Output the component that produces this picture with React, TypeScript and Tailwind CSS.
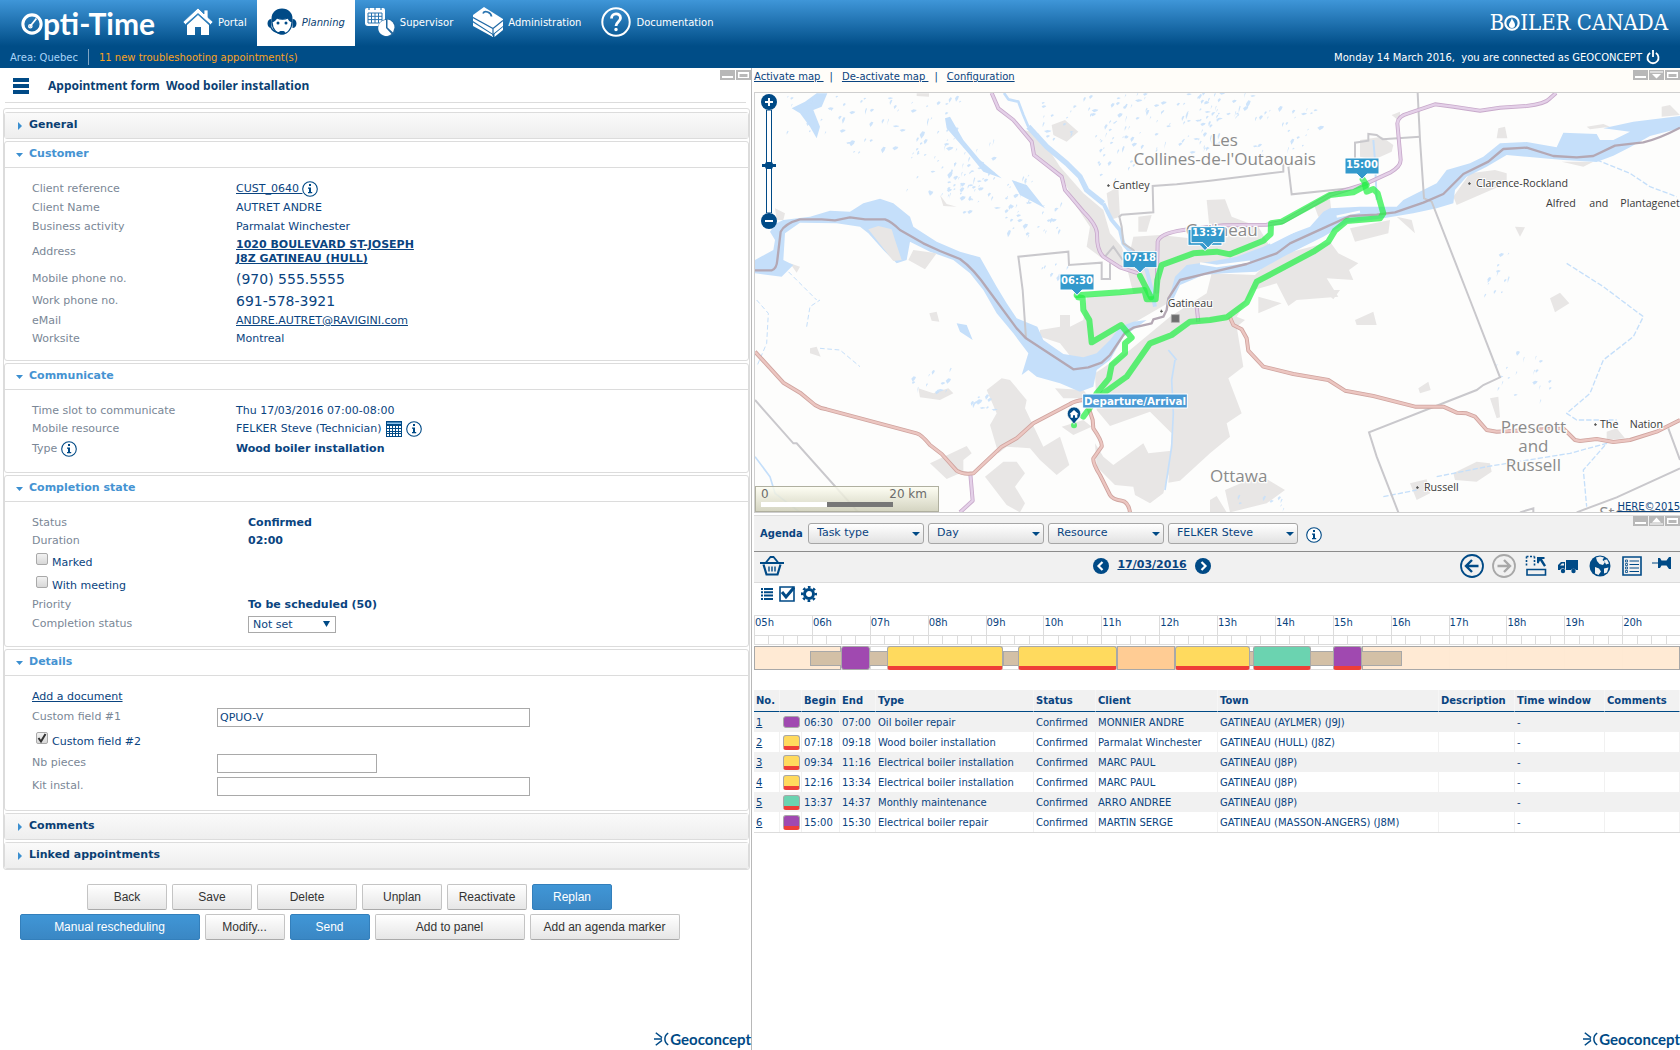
import React, { useState } from 'react';

type Appointment = {
  no: number;
  begin: string;
  end: string;
  type: string;
  client: string;
  town: string;
  color: 'purple' | 'yellow' | 'green';
  late: boolean;
};

const APPOINTMENTS: Appointment[] = [
  { no: 1, begin: '06:30', end: '07:00', type: 'Oil boiler repair', client: 'MONNIER ANDRE', town: 'GATINEAU (AYLMER) (J9J)', color: 'purple', late: false },
  { no: 2, begin: '07:18', end: '09:18', type: 'Wood boiler installation', client: 'Parmalat Winchester', town: 'GATINEAU (HULL) (J8Z)', color: 'yellow', late: true },
  { no: 3, begin: '09:34', end: '11:16', type: 'Electrical boiler installation', client: 'MARC PAUL', town: 'GATINEAU (J8P)', color: 'yellow', late: true },
  { no: 4, begin: '12:16', end: '13:34', type: 'Electrical boiler installation', client: 'MARC PAUL', town: 'GATINEAU (J8P)', color: 'yellow', late: true },
  { no: 5, begin: '13:37', end: '14:37', type: 'Monthly maintenance', client: 'ARRO ANDREE', town: 'GATINEAU (J8P)', color: 'green', late: true },
  { no: 6, begin: '15:00', end: '15:30', type: 'Electrical boiler repair', client: 'MARTIN SERGE', town: 'GATINEAU (MASSON-ANGERS) (J8M)', color: 'purple', late: true },
];

const TASK_COLORS = {
  purple: 'bg-[#a049b0]',
  yellow: 'bg-[#ffda5e]',
  green: 'bg-[#6bd3b0]',
};

const HOURS = ['05h', '06h', '07h', '08h', '09h', '10h', '11h', '12h', '13h', '14h', '15h', '16h', '17h', '18h', '19h', '20h'];

const toHours = (time: string) => {
  const [h, m] = time.split(':').map(Number);
  return h + m / 60;
};

// The timeline covers 05h to 21h
const span = (from: number, to: number) => ({
  left: `${((from - 5) / 16) * 100}%`,
  width: `${((to - from) / 16) * 100}%`,
});

/* ---------- Icons ---------- */

const InfoIcon = () => (
  <svg viewBox="0 0 16 16" className="w-4 h-4 shrink-0">
    <circle cx="8" cy="8" r="7.3" fill="#fff" stroke="#004a86" strokeWidth="1.1" />
    <path d="M7 3h2v2H7zM6 6.5h3V11h1.2v1.2H6V11h1V7.7H6z" fill="#004a86" />
  </svg>
);

const HomeIcon = () => (
  <svg viewBox="0 0 30 30" className="w-[30px] h-[30px]">
    <path d="M15 8 4 18v10h8v-8h6v8h8V18z" fill="#fff" />
    <path d="M15 1 0 15l2.5 2.5L15 6.5l12.500 11L30 15l-5-4.500V3h-4v4z" fill="#fff" stroke="#2f82c2" strokeWidth=".8" />
  </svg>
);

const AgentIcon = () => (
  <svg viewBox="0 0 30 30" className="w-[30px] h-[30px]">
    <path d="M15 1.500C8.500 1.500 4.500 6 4.500 11.500v4h21v-4C25.500 6 21.500 1.500 15 1.500z" fill="#004a86" />
    <path d="M4.500 12C2 12 .5 14 .5 16.500S2 21 4.500 21zM25.500 12c2.500 0 4 2 4 4.500s-1.500 4.500-4 4.500z" fill="#004a86" />
    <path d="M5 15c2.500-1 4-2.500 5-4 3 1.500 8 1.500 11 0 .5 1.500 2 3 4 4-.2 7-4.500 12-10 12S5.200 22 5 15z" fill="#fff" stroke="#004a86" strokeWidth="1.200" />
    <circle cx="11" cy="16" r="1.500" fill="#004a86" />
    <circle cx="19" cy="16" r="1.500" fill="#004a86" />
    <path d="M4 20.500c1.500 3.500 5 5 9 5.500" fill="none" stroke="#004a86" strokeWidth="1.600" />
    <rect x="12" y="24" width="6" height="3.500" rx="1.500" fill="#004a86" />
  </svg>
);

const SupervisorIcon = () => (
  <svg viewBox="0 0 30 30" className="w-[30px] h-[30px]">
    <path d="M2 1h16a2 2 0 0 1 2 2v16H3a3 3 0 0 1-3-3V3a2 2 0 0 1 2-2z" fill="#fff" />
    <path d="M4 0v3M10 0v3M16 0v3" stroke="#2e7dbb" strokeWidth="1.200" />
    <path d="M3 6h14v10H3zM3 9.300h14M3 12.600h14M6.500 6v10M10 6v10M13.500 6v10" fill="none" stroke="#2a74b0" strokeWidth="1" />
    <circle cx="22" cy="21" r="9" fill="#20679f" />
    <path d="M21 13a8 8 0 1 0 5.500 14L21 21z" fill="#fff" />
    <path d="M22.500 12.500a8 8 0 0 1 7 8l-1.500 5-5.500-5z" fill="#fff" />
  </svg>
);

const ToolboxIcon = () => (
  <svg viewBox="0 0 30 30" className="w-[30px] h-[30px]">
    <path d="M0 8 11 0l19 12v7l-10 8L0 14z" fill="#fff" />
    <path d="M0 15.500 20 28v2L0 19zM21.500 27l8.500-7v3l-8.500 7z" fill="#fff" />
    <path d="m0 10.500 20 11 10-8M20 21.500V29" fill="none" stroke="#2069a5" strokeWidth="1.200" />
    <path d="M10 6.500c1.500-3.500 8-1.500 8.500 3" fill="none" stroke="#2a74b0" strokeWidth="1.800" />
  </svg>
);

const HelpIcon = () => (
  <svg viewBox="0 0 30 30" className="w-[30px] h-[30px]" fill="none" stroke="#fff">
    <circle cx="15" cy="15" r="13.700" strokeWidth="2" />
    <path d="M10.500 11.500c0-6 9-6 9-.5 0 3.500-4.500 4-4.500 8" strokeWidth="2.800" />
    <circle cx="15" cy="22.500" r="1" strokeWidth="1.500" fill="#fff" />
  </svg>
);

const PowerIcon = () => (
  <svg viewBox="0 0 14 16" className="w-3.5 h-4" fill="none" stroke="#fff" strokeWidth="1.800">
    <path d="M4.200 4a5.500 5.500 0 1 0 5.600 0M7 1v7" />
  </svg>
);

const GridIcon = () => (
  <svg viewBox="0 0 16 16" className="w-4 h-4">
    <path d="M0 0h16v16H0z" fill="#004a86" />
    <path d="M1 1.500h14v1.500H1z" fill="#8cc4ee" />
    <path d="M1 5h2v2H1zM4 5h2v2H4zM7 5h2v2H7zM10 5h2v2h-2zM13 5h2v2h-2zM1 8h2v2H1zM4 8h2v2H4zM7 8h2v2H7zM10 8h2v2h-2zM13 8h2v2h-2zM1 11h2v1H1zM4 11h2v1H4zM7 11h2v1H7zM10 11h2v1h-2zM13 11h2v1h-2zM1 13h2v2H1zM4 13h2v2H4zM7 13h2v2H7zM10 13h2v2h-2zM13 13h2v2h-2z" fill="#fff" />
  </svg>
);

const BasketIcon = () => (
  <svg viewBox="0 0 24 20" className="w-6 h-5" fill="none" stroke="#004a86">
    <path d="m5.500 7 5-6h3l5 6M0 7h24" strokeWidth="1.800" />
    <path d="m3.500 8.500 3 10h11l3-10" strokeWidth="2.200" />
    <path d="M9 10.500v5M12 10.500v5M15 10.500v5" strokeWidth="1.400" />
  </svg>
);

const ChevronCircle = ({ d }: { d: string }) => (
  <svg viewBox="0 0 16 16" className="w-4 h-4">
    <circle cx="8" cy="8" r="8" fill="#004a86" />
    <path d={d} fill="none" stroke="#fff" strokeWidth="2.200" />
  </svg>
);

const ArrowCircle = ({ d, color }: { d: string; color: string }) => (
  <svg viewBox="0 0 24 24" className="w-6 h-6" fill="none" stroke={color}>
    <circle cx="12" cy="12" r="11" strokeWidth="1.800" />
    <path d={d} strokeWidth="2.400" />
  </svg>
);

const UnplaceIcon = () => (
  <svg viewBox="0 0 22 22" className="w-[22px] h-[22px]" fill="none" stroke="#004a86">
    <path d="M1.500 1.500h8M1.500 1.500V12M9.500 1.500V12" strokeWidth="1.600" strokeDasharray="2 1.500" />
    <path d="M12 2h7.500v2H17l4 6.500-2 1.300-4-6.300-1.500 3L12 8z" fill="#004a86" stroke="none" />
    <path d="M2 14.500h18.500V20H2z" strokeWidth="1.600" />
  </svg>
);

const TruckIcon = () => (
  <svg viewBox="0 0 22 22" className="w-[22px] h-[22px]" fill="#004a86">
    <path d="M9 5h12v10h-2a3 3 0 0 0-5 0H8.500a3 3 0 0 0-5.500 0H1v-5l3-3h4v8h1z" />
    <path d="M3 10.500 5 8.500h2v2z" fill="#f1f1f1" />
    <circle cx="6" cy="16" r="2.200" />
    <circle cx="16.500" cy="16" r="2.200" />
  </svg>
);

const GlobeIcon = () => (
  <svg viewBox="0 0 22 22" className="w-[22px] h-[22px]">
    <circle cx="11" cy="11" r="10.500" fill="#004a86" />
    <path d="M7 2.500 11 1.500l4 1-1.500 2.500L16 7l-2 3-3.500-1-2.500-3zM15 5l3-.5 2 4-3 1zM6 12l4 1.500 2 3L9.500 20 6 18.500zM15 13.500l4.500-1L18 17.500l-3 1z" fill="#f1f1f1" />
  </svg>
);

const SheetIcon = () => (
  <svg viewBox="0 0 20 20" className="w-5 h-5" fill="none" stroke="#004a86">
    <path d="M1 1h18v18H1z" strokeWidth="1.600" />
    <path d="M7.500 5H17M7.500 8.500H17M7.500 12H17M7.500 15.500H17" strokeWidth="1.200" />
    <path d="M3.500 4h2v2h-2zM3.500 7.500h2v2h-2zM3.500 11h2v2h-2zM3.500 14.500h2v2h-2z" strokeWidth=".8" />
  </svg>
);

const PinIcon = () => (
  <svg viewBox="0 0 20 14" className="w-5 h-3.5" fill="#004a86">
    <path d="M0 6.500h6V2h2l1.500 2.500h5L17 1h2v12h-2l-2.500-3.500h-5L8 12H6V7.500H0z" />
  </svg>
);

const WindowButton = ({ kind, label }: { kind: 'min' | 'down' | 'up' | 'max'; label: string }) => (
  <button type="button" aria-label={label} className="block bg-[#b8b8b8] hover:bg-gray-500">
    <svg viewBox="0 0 15 10" className="w-[15px] h-2.5" fill="#fff">
      {kind === 'min' && <path d="M2 6h11v2H2z" />}
      {kind === 'down' && <path d="M1 1.500h13v1H1zM3 4h9L7.500 8.500z" />}
      {kind === 'up' && <path d="M1 7.500h13v1H1zM3 6.500h9L7.500 1.500z" />}
      {kind === 'max' && <path d="M2 2h11v6H2zM3.500 4h8v3h-8z" fillRule="evenodd" />}
    </svg>
  </button>
);

const GeoconceptLogo = () => (
  <div className="flex items-center justify-end text-[#004a86]">
    <svg viewBox="0 0 18 16" className="w-4 h-4" fill="none" stroke="#004a86" strokeWidth="1.700">
      <path d="M0 8h9M2 1l7 5.500M2 15l7-5.500M16 1.500c-5 3-5 10 0 13" />
    </svg>
    <span className="font-['Lato',sans-serif] font-bold text-[15px] leading-4">Geoconcept</span>
  </div>
);

/* ---------- Header ---------- */

const NAV = [
  { label: 'Portal', icon: <HomeIcon /> },
  { label: 'Planning', icon: <AgentIcon /> },
  { label: 'Supervisor', icon: <SupervisorIcon /> },
  { label: 'Administration', icon: <ToolboxIcon /> },
  { label: 'Documentation', icon: <HelpIcon /> },
];

const Header = () => (
  <header className="h-[68px] bg-[linear-gradient(#3f96d8,#004d87_46px)] text-white text-[10px]">
    <div className="h-[46px] flex items-center">
      <div className="w-[173px] pl-[21px] flex items-center font-['Lato',sans-serif] font-bold text-[30px] leading-none">
        <svg viewBox="0 0 20 20" className="w-[22px] h-[22px] mt-0.5" fill="none" stroke="#fff">
          <circle cx="10" cy="10" r="8.300" strokeWidth="2.800" />
          <path d="M8 12.500 14 5" strokeWidth="1.600" />
          <circle cx="8.500" cy="12" r="1.500" strokeWidth="1.200" />
        </svg>
        <span>pti-Time</span>
      </div>
      <nav className="flex">
        {NAV.map(item => {
          const active = item.label === 'Planning';
          return (
            <a
              key={item.label}
              href="#"
              className={`h-[46px] px-2.5 flex items-center gap-[5px] pb-0.5 ${active ? 'bg-white text-[#0b3f73] italic' : 'text-white'}`}
            >
              {item.icon}
              {item.label}
            </a>
          );
        })}
      </nav>
      <div className="ml-auto pr-3 flex items-center font-['DejaVu_Serif_Condensed','DejaVu_Serif',serif] text-[22px] leading-none">
        B
        <svg viewBox="0 0 16 16" className="w-4 h-4">
          <circle cx="8" cy="8" r="6.700" fill="none" stroke="#fff" strokeWidth="2.200" />
          <path d="M8 2.500c0 3 3 4 3 7.500a3 3 0 0 1-6 0c0-2 2-3 3-7.500z" fill="#fff" />
        </svg>
        ILER CANADA
      </div>
    </div>
    <div className="h-[22px] pl-2.5 pr-5 flex items-center">
      <span className="text-[#a8d4f8]">Area: Quebec</span>
      <span className="w-px h-4 mx-2.5 bg-[#7fa5c4]" />
      <a href="#" className="text-[#f9a11f]">11 new troubleshooting appointment(s)</a>
      <span className="ml-auto mr-1">Monday 14 March 2016,&nbsp; you are connected as GEOCONCEPT</span>
      <button type="button" aria-label="Log out"><PowerIcon /></button>
    </div>
  </header>
);

/* ---------- Appointment form ---------- */

const Section = ({ title, children }: { title: string; children?: React.ReactNode }) => {
  const open = Boolean(children);
  return (
    <section className="border border-[#dcdcdc] rounded-[3px] bg-white">
      <h2 className={open ? 'border-b border-[#dcdcdc]' : 'bg-linear-to-b from-[#fafafa] to-[#eeeeee]'}>
        <button
          type="button"
          aria-expanded={open}
          className={`w-full h-[25px] pl-[11px] flex items-center gap-1.5 text-[11px] font-bold ${open ? 'text-[#4593d2]' : 'text-[#0b3f73]'}`}
        >
          <svg viewBox="0 0 7 8" className="w-[7px] h-2" fill="#3b8fd0">
            {open ? <path d="M0 2h7L3.500 6z" /> : <path d="M2 0v8l4-4z" />}
          </svg>
          {title}
        </button>
      </h2>
      {open && <div className="py-3 pl-[27px]">{children}</div>}
    </section>
  );
};

type RowProps = { label: React.ReactNode; height?: string; labelWidth?: string; htmlFor?: string; children: React.ReactNode };

const Row = ({ label, height = 'h-[18px]', labelWidth = 'w-[204px]', htmlFor, children }: RowProps) => (
  <div className={`flex items-center ${height}`}>
    {htmlFor ? (
      <label htmlFor={htmlFor} className={`${labelWidth} shrink-0 text-[#7a8796]`}>{label}</label>
    ) : (
      <span className={`${labelWidth} shrink-0 flex items-center gap-1 text-[#7a8796]`}>{label}</span>
    )}
    {children}
  </div>
);

const Check = ({ label, checked }: { label: string; checked?: boolean }) => (
  <label className="flex items-start gap-1 pl-1 w-fit">
    <span className="relative block w-3 h-3">
      <input
        type="checkbox"
        defaultChecked={checked}
        className="peer block appearance-none w-3 h-3 border border-[#a9a9a9] rounded-[2px] bg-linear-to-b from-[#f2f2f2] to-[#d8d8d8]"
      />
      <svg viewBox="0 0 12 12" className="absolute inset-0 w-3 h-3 hidden peer-checked:block pointer-events-none">
        <path d="m2.500 6 2.500 3.500L9.500 2" fill="none" stroke="#333" strokeWidth="2" />
      </svg>
    </span>
    <span className="pt-[3px] leading-[14px]">{label}</span>
  </label>
);

const FormButton = ({ children, primary, width = 'w-20' }: { children: React.ReactNode; primary?: boolean; width?: string }) => (
  <button
    type="button"
    className={`${width} h-[26px] rounded-[2px] border text-[12px] font-['Liberation_Sans',Arial,sans-serif] ${
      primary
        ? 'border-[#337fbb] bg-linear-to-b from-[#4096d6] to-[#3a87c4] text-white'
        : 'border-[#c4c4c4] border-b-[#aaaaaa] bg-linear-to-b from-white to-[#e6e6e6] text-[#333333]'
    }`}
  >
    {children}
  </button>
);

const AppointmentForm = () => (
  <div className="min-w-0 flex flex-col border-r border-[#b8b8b8]">
    <div className="h-[34px] flex items-center pl-[13px]">
      <button type="button" aria-label="Menu" className="flex flex-col gap-0.5 mt-0.5">
        <span className="block w-4 h-1 bg-[#004a86]" />
        <span className="block w-4 h-1 bg-[#004a86]" />
        <span className="block w-4 h-1 bg-[#004a86]" />
      </button>
      <h1 className="ml-[19px] mt-0.5 text-[12px] font-bold text-[#0b3f73] font-['Noto_Sans','DejaVu_Sans',sans-serif]">
        Appointment form&nbsp; Wood boiler installation
      </h1>
      <div className="ml-auto self-start mt-0.5 flex gap-px">
        <WindowButton kind="min" label="Minimise" />
        <WindowButton kind="max" label="Maximise" />
      </div>
    </div>
    <div className="mx-[5px] border-t border-[#dcdcdc]" />

    <div className="mt-[5px] ml-[3px] mr-px pt-[3px] border border-[#dcdcdc] rounded-[3px] flex flex-col gap-0.5">
      <Section title="General" />
      <Section title="Customer">
        <Row label="Client reference">
          <a href="#" className="underline">CUST_0640&nbsp;</a>
          <InfoIcon />
        </Row>
        <Row label="Client Name" height="h-5">AUTRET ANDRE</Row>
        <Row label="Business activity">Parmalat Winchester</Row>
        <Row label="Address" height="h-8">
          <a href="#" className="font-bold underline leading-[14px]">
            1020 BOULEVARD ST-JOSEPH
            <br />
            J8Z GATINEAU (HULL)
          </a>
        </Row>
        <Row label="Mobile phone no." height="h-[22px]"><span className="text-[14px]">(970) 555.5555</span></Row>
        <Row label="Work phone no." height="h-[22px]"><span className="text-[14px]">691-578-3921</span></Row>
        <Row label="eMail"><a href="#" className="underline">ANDRE.AUTRET@RAVIGINI.com</a></Row>
        <Row label="Worksite">Montreal</Row>
      </Section>
      <Section title="Communicate">
        <Row label="Time slot to communicate">Thu 17/03/2016 07:00-08:00</Row>
        <Row label="Mobile resource">
          <span className="flex items-center gap-1">FELKER Steve (Technician) <GridIcon /> <InfoIcon /></span>
        </Row>
        <Row label={<>Type <InfoIcon /></>} height="h-[22px]"><b>Wood boiler installation</b></Row>
      </Section>
      <Section title="Completion state">
        <Row label="Status" labelWidth="w-[216px]"><b>Confirmed</b></Row>
        <Row label="Duration" labelWidth="w-[216px]"><b>02:00</b></Row>
        <div className="h-[23px] flex items-center"><Check label="Marked" /></div>
        <div className="h-[23px] flex items-center"><Check label="With meeting" /></div>
        <Row label="Priority" labelWidth="w-[216px]"><b>To be scheduled (50)</b></Row>
        <Row label="Completion status" labelWidth="w-[216px]" height="h-5" htmlFor="completion">
          <span className="relative">
            <select id="completion" className="block appearance-none w-[88px] h-[17px] pl-1 border border-[#a9a9a9] bg-white">
              <option>Not set</option>
            </select>
            <svg viewBox="0 0 7 6" className="absolute right-1.5 top-[5px] w-[7px] h-1.5 pointer-events-none" fill="#004a86">
              <path d="M0 0h7L3.500 6z" />
            </svg>
          </span>
        </Row>
      </Section>
      <Section title="Details">
        <div className="h-[18px] flex items-center"><a href="#" className="underline">Add a document</a></div>
        <Row label="Custom field #1" labelWidth="w-[185px]" height="h-[23px]" htmlFor="field1">
          <input id="field1" type="text" defaultValue="QPUO-V" className="w-[313px] h-[19px] px-0.5 border border-[#a9a9a9]" />
        </Row>
        <div className="h-[23px] flex items-center"><Check label="Custom field #2" checked /></div>
        <Row label="Nb pieces" labelWidth="w-[185px]" height="h-[23px]" htmlFor="pieces">
          <input id="pieces" type="text" className="w-40 h-[19px] px-0.5 border border-[#a9a9a9]" />
        </Row>
        <Row label="Kit instal." labelWidth="w-[185px]" height="h-[23px]" htmlFor="kit">
          <input id="kit" type="text" className="w-[313px] h-[19px] px-0.5 border border-[#a9a9a9]" />
        </Row>
      </Section>
      <Section title="Comments" />
      <Section title="Linked appointments" />
    </div>

    <div className="mt-3.5 mr-[52px] flex flex-col items-center gap-1">
      <div className="flex gap-[5px]">
        <FormButton>Back</FormButton>
        <FormButton>Save</FormButton>
        <FormButton width="w-[100px]">Delete</FormButton>
        <FormButton>Unplan</FormButton>
        <FormButton>Reactivate</FormButton>
        <FormButton primary>Replan</FormButton>
      </div>
      <div className="flex gap-[5px]">
        <FormButton primary width="w-[180px]">Manual rescheduling</FormButton>
        <FormButton>Modify...</FormButton>
        <FormButton primary>Send</FormButton>
        <FormButton width="w-[150px]">Add to panel</FormButton>
        <FormButton width="w-[150px]">Add an agenda marker</FormButton>
      </div>
    </div>

    <div className="mt-auto pb-[3px]"><GeoconceptLogo /></div>
  </div>
);

/* ---------- Map ---------- */

// Small lakes scattered around [x, y, spread x, spread y, count]
const LAKES = [
  [200, 150, 90, 80, 22], [450, 200, 180, 90, 44], [600, 330, 130, 90, 56], [720, 400, 130, 60, 40],
  [850, 480, 90, 50, 26], [1000, 180, 130, 70, 36], [1250, 190, 160, 90, 70], [1400, 130, 130, 50, 40],
  [1600, 230, 110, 100, 30], [1130, 300, 90, 60, 16], [900, 640, 60, 30, 8], [540, 960, 60, 40, 12],
  [2240, 650, 40, 70, 14], [2340, 950, 110, 80, 20], [690, 1030, 40, 20, 10], [1530, 1330, 80, 20, 8],
];

const lakePath = (() => {
  let seed = 7;
  const rnd = () => {
    seed = (seed * 16807) % 2147483647;
    return seed / 2147483647;
  };
  let d = '';
  LAKES.forEach(([x, y, sx, sy, n]) => {
    for (let i = 0; i < n; i++) {
      const px = Math.round(x + (rnd() * 2 - 1) * sx);
      const py = Math.round(y + (rnd() * 2 - 1) * sy);
      const w = Math.round(2 + rnd() * rnd() * 9);
      const h = Math.round(2 + rnd() * rnd() * 9);
      d += `M${px} ${py}l${w} ${-h}l${w} 2l-3 ${h}l${-w} ${h}z`;
    }
  });
  return d;
})();

const PURPLE_ROADS = [
  'M725 99 745 145 790 180 845 245 852 285 935 350 945 390 1000 455Q1040 495 1041 520Q1040 570 1060 590L1110 622 1165 640',
  'M1340 740 1345 785',
  'M1220 700 1223 545Q1230 520 1300 510L1420 496 1550 494 1600 485 1740 405 1850 370 1920 338Q1952 320 1952 300L1942 190Q1944 168 1975 160L2055 133 2110 140 2190 152 2250 143 2330 138Q2385 132 2400 115L2418 99',
  'M661 1242 668 1322 630 1357',
];

const RED_ROADS = [
  'M15 875 100 968 150 998 195 1035Q210 1045 230 1048L500 1120Q515 1124 540 1155L575 1182 620 1232Q640 1245 670 1240L755 1160 800 1135 850 1090 960 1032Q975 1022 1000 1020L1018 1050 1028 1080 1030 1105Q1058 1145 1055 1160L1030 1195Q1028 1210 1050 1245L1080 1305Q1087 1318 1115 1322Q1135 1325 1140 1357',
  'M1440 772 1450 795 1475 808 1490 835 1495 872 1540 920 1630 942 1735 960 1785 992 1870 1008 1995 1040 2080 1040 2120 1058 2150 1060 2175 1070 2210 1110 2240 1115 2440 1105 2475 1140 2490 1143 2540 1137 2590 1146 2640 1140 2720 1115 2790 1080',
];

const BOUNDARIES = [
  'M828 835 818 690 805 590 955 575 957 615 1055 608V657H1080V610 M1065 590 1090 560 1118 600',
  'M1180 620 1150 570 1120 550 1115 500 1108 470 1115 464 1210 457 1208 378 1280 373 1380 362 1600 335V310M1615 320 1625 403 1800 385',
  'M1815 300V248L1855 242V222L1880 225 1898 238 2010 230',
  'M2003 99 2010 240 2022 415 2045 425 2160 720 2250 952 2200 975 2180 990 1857 1117 1880 1190 1945 1357',
  'M15 1020 130 1150H140L325 1357',
  'M2790 1225 2600 1312 2480 1357M2755 1105 2790 1200M2310 1357 2350 1345V1357',
];

const URBAN = [
  'M820 210 865 220 930 320 1000 400 1060 450 1080 520 1115 560 1130 600 1120 630 1050 590 1010 560 1020 500 980 440 940 360 860 290z',
  'M1130 620 1150 530 1230 525 1320 535 1380 560 1520 540 1540 590 1380 620 1280 660 1270 720 1150 790 1060 890 970 900 930 850 870 830V810L930 800V765H960V800L1000 780 1010 710 1150 700z',
  'M1370 420 1425 418 1445 470 1525 500 1560 560 1380 590 1290 560 1380 520z',
  'M1260 770 1370 700 1385 640 1515 645 1570 590 1740 545 1765 580 1825 610 1797 630 1810 660 1730 655 1765 710 1640 720 1615 738 1580 670 1510 690 1460 770 1485 780 1460 800 1480 920 1435 955 1475 1060 1430 1090 1440 1130 1380 1180 1290 1262 1255 1268 1265 1120 1200 1055 1080 1098 1040 1050 1035 940 1140 870z',
  'M710 990 755 955 780 960 830 1020 825 1045 880 1160 930 1130 958 1215 920 1245 870 1200 840 1165 770 1160 745 1180 720 1095 740 1060z',
  'M1035 1150 1060 1190 1090 1215 1180 1150 1195 1180 1285 1170 1250 1260 1240 1300 1200 1330 1155 1305 1150 1280 1095 1275 1040 1220z',
  'M540 1210 650 1158 665 1180 640 1200V1235L590 1257z',
  'M705 1250 760 1205 800 1205 825 1240 795 1280 825 1330 810 1357 770 1335z',
  'M905 195 945 180 985 215 950 245 910 225z M570 405 590 432 620 440 580 438z M500 100H537V110L500 108z',
  'M1070 400 1105 380 1110 470 1080 480z M1165 470 1205 465 1190 515 1165 515z',
  'M1830 240 1895 230 1930 255 1925 275 1870 300 1830 290z M1925 165 1950 155V185z M2245 205 2265 200 2272 235 2240 235z',
  'M2110 410 2160 340 2235 330 2270 340V370L2120 435z M1800 505 1920 480 1915 520 1815 545z M1940 470 1985 480 1995 520z M2295 500 2325 502 2310 530z',
  'M2735 140 2760 135 2790 165 2735 170z M2510 200 2560 192 2580 200 2520 208z M2435 305 2530 305 2500 320z M1690 430 1740 418 1745 460 1705 470z',
  'M1525 710 1595 730 1525 760z M1815 780 1870 755 1880 795 1820 795z M2400 715 2430 698 2458 730 2415 757z M2005 985 2035 965 2042 990 2010 1000z M2220 1015 2245 1010 2250 1072 2240 1075z',
  'M1425 1290 1530 1245 1605 1290 1550 1330 1440 1357z M1380 1320 1400 1308 1430 1357H1380z M2110 1240 2180 1205 2220 1210 2225 1235 2180 1265 2115 1260z M1980 1270 2030 1258 2040 1300 2000 1320z',
  'M180 865 200 860 212 890 180 880z M538 760 560 755 568 785 545 782z M505 985 550 1000 595 985 610 1000 570 1020 510 1012z M75 445 105 460 100 480 80 480z M120 610 150 620 140 638z',
  'M915 985 1000 990 1020 1015 940 1015z M935 1100 1000 1080 1025 1100 970 1125z M1720 690H1770L1750 718z M2570 1115 2600 1105 2625 1135 2570 1140z',
];

const WATER = [
  'M15 600 70 570 75 540 60 515 80 490 100 480 180 470 240 452 300 455 340 430 390 416 430 430 480 470 490 500 560 545 630 575 690 592 740 680 770 730 800 775 862 800 880 840 940 882 1000 892 1040 880 1080 840 1110 800 1150 785 1190 780 1120 830 1080 900 1040 930 1030 980 990 995 930 970 860 950 835 930 815 945 835 880 790 820 740 760 700 690 660 640 610 600 540 575 480 545 470 600 440 610 400 570 355 520 330 500 260 490 150 488 105 520 100 600 130 615 95 650 15 640z',
  'M1250 740 1275 650 1310 615 1380 605 1460 590 1540 560 1600 530 1680 500 1720 455 1740 445 1830 440 1940 440 1960 420 2000 400 2060 370 2090 330 2160 310 2200 290 2250 250 2330 246 2420 262 2440 218 2540 222 2550 240 2590 240 2640 215 2560 205 2650 185 2790 168V205L2700 228 2640 262 2590 287 2540 306 2440 300 2380 295 2270 285 2210 320 2150 350 2115 390 2110 430 2060 445 1990 460 1900 475 1790 488 1720 530 1600 590 1520 635 1420 640 1360 645 1290 675 1262 735z',
  'M125 145 165 125 200 100 232 100 215 140 190 150 210 200 200 235 180 200 150 160z',
  'M585 175 600 170 640 240 690 300 755 355 700 335 655 280 590 205z M785 360 830 375 885 445 810 405z M620 790 650 795 668 840 630 815z',
];

const Route = ({ d }: { d: string }) => (
  <path d={d} fill="none" stroke="#22f045" strokeOpacity=".72" strokeWidth="18" strokeLinejoin="round" strokeLinecap="round" />
);

const TimePin = ({ x, y, label }: { x: number; y: number; label?: string }) => (
  <g>
    <path d={`M${x - 51} ${y}h102v48h-36l-15 16-15-16h-36z`} fill="#3399cc" stroke="#fff" strokeWidth="3" />
    {label && <text x={x} y={y + 29} textAnchor="middle" fill="#fff" fontSize="30" fontWeight="bold">{label}</text>}
  </g>
);

const RegionalMap = () => (
  <svg
    viewBox="15 99 2775 1257"
    preserveAspectRatio="xMidYMid slice"
    className="block w-full h-full font-['DejaVu_Sans',sans-serif]"
    role="img"
    aria-label="Map of the route"
  >
    <rect x="15" y="99" width="2775" height="1257" fill="#fdfdfc" />
    <g fill="#e8e6e5">{URBAN.map(d => <path key={d} d={d} />)}</g>
    <g fill="#c5dffa">
      {WATER.map(d => <path key={d} d={d} />)}
      <path d={lakePath} opacity=".85" />
    </g>
    <path d="M355 508 385 498 425 508 435 540 455 600 430 603zM490 570 560 580 525 628 475 600z" fill="#e8e6e5" />
    <g fill="none" stroke="#c5dffa" strokeLinejoin="round">
      <path d="M762 99 775 118 805 125 820 165 835 200" strokeWidth="8" />
      <path d="M835 200 890 260 950 310 990 350 1010 390 1060 430" strokeWidth="16" />
      <path d="M1060 430 1085 480 1110 510 1120 550 1190 630 1205 690 1215 740" strokeWidth="12" />
      <path d="M1275 900 1265 960 1270 1060 1265 1160 1245 1290M1255 870 1280 900M15 1190 60 1250 75 1300 150 1357" strokeWidth="5" />
      <path d="M20 720 55 760 50 850 20 920M170 800 180 740 210 720M210 865 270 870 330 920M100 620 200 720" strokeWidth="3" strokeDasharray="14 8" />
      <path d="M2540 300 2640 340 2700 380 2780 410M2450 610 2560 680 2640 740 2680 770 2650 830 2560 900 2520 1000 2450 1060 2480 1080 2600 1080M2060 1250 2210 1220 2460 1180 2570 1150 2500 1230 2510 1340M1900 1310 2000 1290" strokeWidth="4" strokeDasharray="16 6" />
      <path d="M1870 240 1875 300 1880 420" strokeWidth="6" />
      <path d="M1350 610 1400 618 1500 605M1560 550 1640 510M1760 470 1830 455" stroke="#fdfdfc" strokeWidth="7" />
    </g>

    <g fill="none" stroke="#c9c8cc" strokeWidth="6">{BOUNDARIES.map(d => <path key={d} d={d} />)}</g>
    <path
      d="M15 631H65Q80 627 82 600L92 515Q105 490 150 478L215 478 255 481 300 472 345 478 405 478Q425 485 450 510L520 550 570 573 630 597Q670 625 715 690L800 805 828 835 970 928 1015 922 1055 908 1080 885 1125 818 1150 803 1205 790 1210 778 1240 770 1250 750 1255 715 1290 660 1380 638 1490 612 1580 580 1620 550 1730 500 1800 468 1880 464 1935 457 2020 428 2080 402 2140 342 2215 305 2260 267 2330 263 2410 288 2480 292 2530 288 2595 257 2680 247Q2730 235 2790 203"
      fill="none" stroke="#b4a8b4" strokeWidth="7" strokeLinejoin="round"
    />
    {PURPLE_ROADS.map(d => (
      <g key={d} fill="none" strokeLinejoin="round">
        <path d={d} stroke="#c8aacb" strokeWidth="12" />
        <path d={d} stroke="#e4d0e8" strokeWidth="7" />
      </g>
    ))}
    {RED_ROADS.map(d => (
      <g key={d} fill="none" strokeLinejoin="round">
        <path d={d} stroke="#cfa49f" strokeWidth="12" />
        <path d={d} stroke="#ecc6c1" strokeWidth="7" />
      </g>
    ))}

    <g
      className="font-['Open_Sans',sans-serif]"
      fill="#8b8b8b" fontSize="51" textAnchor="middle" stroke="#fdfdfc" strokeWidth="8" paintOrder="stroke"
    >
      <text x="1424" y="258">Les</text>
      <text x="1424" y="315">Collines-de-l'Outaouais</text>
      <text x="1415" y="528">Gatineau</text>
      <text x="1466" y="1265">Ottawa</text>
      <text x="2350" y="1120">Prescott</text>
      <text x="2350" y="1177">and</text>
      <text x="2350" y="1234">Russell</text>
      <text x="2660" y="1378">Stormont</text>
    </g>
    <g
      className="font-['Open_Sans',sans-serif]"
      fill="#3a3a3a" fontSize="32" stroke="#fdfdfc" strokeWidth="6" paintOrder="stroke"
    >
      <text x="1088" y="388">Cantley</text>
      <text x="2178" y="381">Clarence-Rockland</text>
      <text x="2388" y="441">Alfred</text>
      <text x="2518" y="441">and</text>
      <text x="2611" y="441">Plantagenet</text>
      <text x="1253" y="741">Gatineau</text>
      <text x="2550" y="1103">The</text>
      <text x="2639" y="1103">Nation</text>
      <text x="2022" y="1292">Russell</text>
    </g>
    <path d="M1071 377h9M1075 372v9M2154 371h9M2158 366v9M1230 754h9M1234 749v9M2532 1094h9M2536 1089v9M1998 1283h9M2002 1278v9" stroke="#444" strokeWidth="2.500" />

    <Route d="M980 706 1110 697 1183 690 1190 718H1217L1222 660 1235 615 1330 580 1400 575 1440 583 1540 542 1562 522 1563 490 1595 485 1740 405 1810 397 1850 375 1838 358" />
    <Route d="M1170 648 1203 712" />
    <Route d="M1845 375 1850 395 1870 387 1883 400 1900 460 1890 475 1790 483 1755 512 1735 545 1690 575 1520 665 1490 728 1430 772 1380 780 1320 785 1265 825 1200 850 1130 950 1060 1000" />
    <Route d="M985 712 998 714 1000 750 1018 780 1025 847 1113 795 1145 833 1125 850V880L1085 915 1077 955 1040 1000 1022 1040 1000 1070" />
    <circle cx="972" cy="1096" r="9" fill="#22f045" fillOpacity=".72" />
    <path d="M1264 764h24v23h-24z" fill="#6e6e6e" stroke="#aaa" strokeWidth="2" />

    <TimePin x={981} y={642} label="06:30" />
    <TimePin x={1170} y={575} label="07:18" />
    <TimePin x={1365} y={508} />
    <TimePin x={1374} y={500} label="13:37" />
    <TimePin x={1836} y={294} label="15:00" />

    <path d="M972 1093c-8-14-20-20-20-32a20 20 0 0 1 40 0c0 12-12 18-20 32z" fill="#004a86" stroke="#fff" strokeWidth="2" />
    <path d="m958 1063 14-13 14 13h-4v10h-7v-7h-6v7h-7v-10z" fill="#fff" />
    <path d="M998 1002h314v42H998z" fill="#4a9ad5" stroke="#fff" strokeWidth="3" />
    <text x="1155" y="1034" textAnchor="middle" fill="#fff" fontSize="31" fontWeight="bold">Departure/Arrival</text>
  </svg>
);

const MapPanel = () => (
  <section>
    <div className="h-6 flex items-start justify-between bg-[#fffdf9]">
      <div className="pt-px flex text-[10px] leading-4">
        <a href="#" className="underline">Activate map&nbsp;</a>
        <span className="px-1.5">|</span>
        <a href="#" className="ml-[3px] underline">De-activate map&nbsp;</a>
        <span className="px-1.5">|</span>
        <a href="#" className="ml-[3px] underline">Configuration</a>
      </div>
      <div className="mt-0.5 flex gap-px">
        <WindowButton kind="min" label="Minimise map" />
        <WindowButton kind="down" label="Expand map" />
        <WindowButton kind="max" label="Maximise map" />
      </div>
    </div>
    <div className="relative h-[421px] border border-r-0 border-[#cfcfcf] overflow-hidden">
      <RegionalMap />
      <div className="absolute left-1.5 top-px w-4 flex flex-col items-center">
        <button type="button" aria-label="Zoom in">
          <svg viewBox="0 0 16 16" className="block w-4 h-4"><circle cx="8" cy="8" r="8" fill="#004a86" /><path d="M4 8h8M8 4v8" stroke="#fff" strokeWidth="2" /></svg>
        </button>
        <svg viewBox="0 0 16 103" className="block w-4 h-[103px]">
          <path d="M5.500 0h5v103h-5z" fill="#fff" stroke="#004a86" />
          <path d="M1 54h3l1-2h6l1 2h3v3h-3l-1 2H5l-1-2H1z" fill="#004a86" />
        </svg>
        <button type="button" aria-label="Zoom out">
          <svg viewBox="0 0 16 16" className="block w-4 h-4"><circle cx="8" cy="8" r="8" fill="#004a86" /><path d="M4 8h8" stroke="#fff" strokeWidth="2" /></svg>
        </button>
      </div>
      <div className="absolute left-0 bottom-0 w-[184px] h-[26px] px-[5px] border border-[#b0b0a0] bg-linear-to-b from-[#fdfdf0]/80 to-[#d0d0bb]/90 text-[12px] leading-[15px] text-[#6b6b6b]">
        <div className="flex justify-between pr-1.5"><span>0</span><span>20 km</span></div>
        <div className="flex h-[5px] w-[132px]"><span className="flex-1 bg-white" /><span className="flex-1 bg-[#777777]" /></div>
      </div>
      <a href="#" className="absolute right-0 bottom-0 text-[10px] leading-[11px] underline">HERE©2015</a>
    </div>
  </section>
);

/* ---------- Agenda ---------- */

const AgendaSelect = ({ label, value, width = 'w-[116px]' }: { label: string; value: string; width?: string }) => (
  <span className="relative">
    <select
      aria-label={label}
      className={`${width} block appearance-none h-[21px] pl-2 border border-[#a6a6a6] rounded-[3px] bg-linear-to-b from-white to-[#e2e2e2] text-[11px]`}
    >
      <option>{value}</option>
    </select>
    <svg viewBox="0 0 8 4" className="absolute right-1 top-[9px] w-2 h-1 pointer-events-none" fill="#004a86">
      <path d="M0 0h8L4 4z" />
    </svg>
  </span>
);

const Timeline = () => (
  <div className="mt-[15px]">
    <div className="relative border-y border-[#dcdcdc] h-[30px]">
      <div className="grid grid-cols-16 h-5 border-b border-[#dcdcdc]">
        {HOURS.map(h => (
          <span key={h} className="border-l border-[#dcdcdc] text-[10px] leading-[14px]">{h}</span>
        ))}
      </div>
      <div className="grid grid-cols-[repeat(64,1fr)] h-2">
        {Array.from({ length: 64 }, (_, i) => <span key={i} className="border-l border-[#dcdcdc]" />)}
      </div>
    </div>
    <div className="relative mt-px h-6 border-y border-[#dcdcdc]">
      <div className="grid grid-cols-16 h-full">
        {HOURS.map(h => <span key={h} className="border-l border-[#dcdcdc]" />)}
      </div>
      <div className="absolute -top-px h-6 bg-[#ffe9d2]/95 border border-[#a8a8a8]" style={span(5, 6.5)} />
      <div className="absolute -top-px h-6 bg-[#ffe9d2]/95 border border-[#a8a8a8]" style={span(15.5, 21)} />
      <div className="absolute top-1 h-[15px] bg-[#d3c0a6] border border-[#a8a8a8]" style={span(5.97, 7.35)} />
      <div className="absolute top-1 h-[15px] bg-[#d3c0a6] border border-[#a8a8a8]" style={span(9.3, 9.6)} />
      <div className="absolute top-1 h-[15px] bg-[#d3c0a6] border border-[#a8a8a8]" style={span(13.5, 13.7)} />
      <div className="absolute top-1 h-[15px] bg-[#d3c0a6] border border-[#a8a8a8]" style={span(14.6, 16.2)} />
      <div className="absolute -top-px h-6 bg-[#ffcc94] border border-[#a8a8a8]" style={span(11.27, 12.27)} />
      {APPOINTMENTS.map(a => (
        <div
          key={a.no}
          title={a.type}
          className={`absolute -top-px h-6 rounded-[3px] border border-[#a8a8a8] ${TASK_COLORS[a.color]} ${a.late ? 'border-b-4 border-b-[#ee3e38]' : ''}`}
          style={span(toHours(a.begin), toHours(a.end))}
        />
      ))}
    </div>
  </div>
);

const COLUMNS = [
  { title: 'No.', width: 'w-[26px]' },
  { title: '', width: 'w-[22px]' },
  { title: 'Begin', width: 'w-[38px]' },
  { title: 'End', width: 'w-9' },
  { title: 'Type', width: 'w-[158px]' },
  { title: 'Status', width: 'w-[62px]' },
  { title: 'Client', width: 'w-[122px]' },
  { title: 'Town', width: 'w-[221px]' },
  { title: 'Description', width: 'w-[76px]' },
  { title: 'Time window', width: 'w-[90px]' },
  { title: 'Comments', width: '' },
];

const AppointmentTable = () => (
  <table className="mt-5 w-full table-fixed text-[10px] text-left whitespace-nowrap border-separate border-spacing-0 border-b border-[#dcdcdc]">
    <thead>
      <tr className="h-[22px] bg-[#f1f1f1]">
        {COLUMNS.map(c => (
          <th key={c.title} className={`${c.width} pl-0.5 border-b border-b-[#004a86] border-r border-r-[#f6f6f6] font-bold`}>{c.title}</th>
        ))}
      </tr>
    </thead>
    <tbody>
      {APPOINTMENTS.map(a => {
        const cells = [a.begin, a.end, a.type, 'Confirmed', a.client, a.town, '', '-', ''];
        return (
          <tr key={a.no} className="h-5 odd:bg-[#f1f1f1]">
            <td className="pl-0.5 border-r border-[#f1f1f1]"><a href="#" className="underline">{a.no}</a></td>
            <td className="pl-[3px] border-r border-[#f1f1f1]">
              <span className={`block w-[17px] rounded-[3px] border border-[#a8a8a8] ${TASK_COLORS[a.color]} ${a.late ? 'h-[15px] border-b-4 border-b-[#ee3e38]' : 'h-3'}`} />
            </td>
            {cells.map((cell, i) => (
              <td key={i} className="pl-0.5 border-r border-[#f1f1f1]">{cell}</td>
            ))}
          </tr>
        );
      })}
    </tbody>
  </table>
);

const AgendaPanel = () => {
  const [resource] = useState('FELKER Steve');
  return (
    <section className="mt-0.5">
      <div className="h-9 flex items-center gap-1 pl-1.5 border-t border-[#dcdcdc] bg-[#f1f1f1]">
        <b className="w-11 text-[10px]">Agenda</b>
        <AgendaSelect label="Task type" value="Task type" />
        <AgendaSelect label="Period" value="Day" />
        <AgendaSelect label="Group by" value="Resource" />
        <AgendaSelect label="Resource" value={resource} width="w-[130px]" />
        <button type="button" aria-label="Resource details" className="ml-1 mt-0.5"><InfoIcon /></button>
        <div className="ml-auto self-start flex gap-px">
          <WindowButton kind="min" label="Minimise agenda" />
          <WindowButton kind="up" label="Expand agenda" />
          <WindowButton kind="max" label="Maximise agenda" />
        </div>
      </div>
      <div className="h-8 grid grid-cols-[5fr_auto_7fr] items-center pl-1.5 pr-2 pb-[3px] border-t border-t-[#8c8c8c] border-b border-b-[#dcdcdc] bg-[#f1f1f1]">
        <button type="button" aria-label="Basket" className="justify-self-start"><BasketIcon /></button>
        <div className="flex items-center gap-2 pl-1">
          <button type="button" aria-label="Previous day"><ChevronCircle d="m9.500 4-4 4 4 4" /></button>
          <a href="#" className="text-[11px] font-bold underline">17/03/2016</a>
          <button type="button" aria-label="Next day"><ChevronCircle d="m6.500 4 4 4-4 4" /></button>
        </div>
        <div className="justify-self-end flex items-center">
          <button type="button" aria-label="Undo" className="w-8 flex justify-center"><ArrowCircle color="#004a86" d="M18.500 12H6M12 6l-6 6 6 6" /></button>
          <button type="button" aria-label="Redo" className="w-8 flex justify-center"><ArrowCircle color="#a8a8a8" d="M5.500 12H18M12 6l6 6-6 6" /></button>
          <button type="button" aria-label="Unplan task" className="w-8 flex justify-center"><UnplaceIcon /></button>
          <button type="button" aria-label="Routes" className="w-8 flex justify-center"><TruckIcon /></button>
          <button type="button" aria-label="Show on map" className="w-8 flex justify-center"><GlobeIcon /></button>
          <button type="button" aria-label="Report" className="w-8 flex justify-center"><SheetIcon /></button>
          <button type="button" aria-label="Pin" className="w-6 mb-1.5 flex justify-end"><PinIcon /></button>
        </div>
      </div>
      <div className="h-3 mt-[5px] pl-[7px] flex items-center gap-1.5">
        <button type="button" aria-label="List">
          <svg viewBox="0 0 12 12" className="block w-3 h-3" fill="#004a86"><path d="M0 0h2v2H0zM3 0h9v2H3zM0 3.300h2v2H0zM3 3.300h9v2H3zM0 6.600h2v2H0zM3 6.600h9v2H3zM0 10h2v2H0zM3 10h9v2H3z" /></svg>
        </button>
        <button type="button" aria-label="Select">
          <svg viewBox="0 0 16 16" className="block w-4 h-4" fill="none" stroke="#004a86">
            <path d="M1 1h14v14H1z" strokeWidth="1.600" />
            <path d="m3 6 4 5 8-9.500" strokeWidth="3" />
          </svg>
        </button>
        <button type="button" aria-label="Settings">
          <svg viewBox="0 0 16 16" className="block w-4 h-4" fill="none" stroke="#004a86">
            <circle cx="8" cy="8" r="4.500" strokeWidth="3" />
            <circle cx="8" cy="8" r="6.800" strokeWidth="2.400" strokeDasharray="2.670 2.670" strokeDashoffset="1.300" />
          </svg>
        </button>
      </div>
      <Timeline />
      <AppointmentTable />
    </section>
  );
};

const App: React.FC = () => (
  <div className="min-h-screen flex flex-col bg-white text-[11px] text-[#0a4480] font-['DejaVu_Sans',Verdana,sans-serif]">
    <Header />
    <main className="flex-1 grid grid-cols-[47fr_58fr]">
      <AppointmentForm />
      <div className="min-w-0 pl-0.5 flex flex-col">
        <MapPanel />
        <AgendaPanel />
        <div className="mt-auto pb-[3px]"><GeoconceptLogo /></div>
      </div>
    </main>
  </div>
);

export default App;
